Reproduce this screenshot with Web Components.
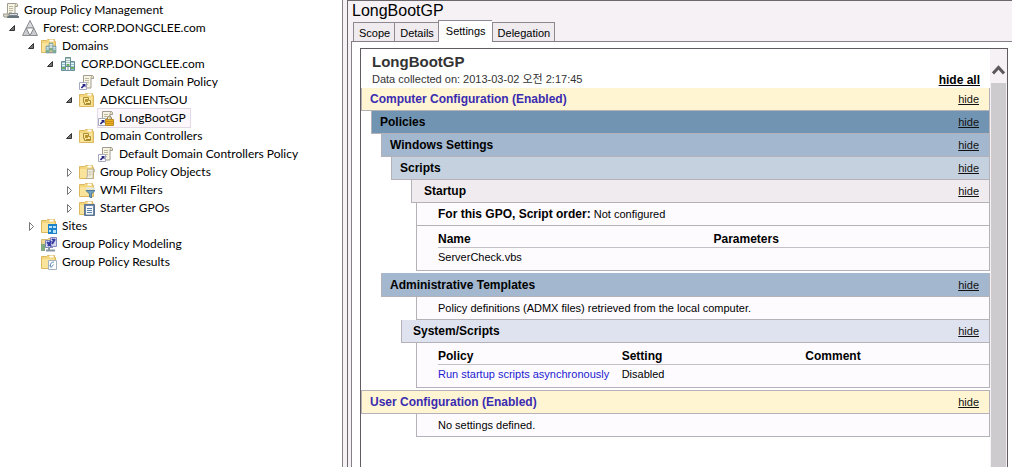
<!DOCTYPE html>
<html lang="en">
<head>
<meta charset="utf-8">
<title>Group Policy Management</title>
<style>
html, body { margin: 0; height: 100%; }
body { background: #fff; color: #000; font: 12px/18px Lato, sans-serif; }
</style>
</head>
<body>
<gp-console></gp-console>
<script>
const ICONS = {
  scroll: `<path d="M4.5 1.5h9q-1.500 1-1.500 3v9.500h-9l1.500-3z" fill="#f8f4e4" stroke="#a09c90"/><path d="M12 4.500h2.500v-2l-1-1" fill="#e8dfba" stroke="#a09c90"/><path d="M6 4.500h4M6 6.500h4M6 8.500h4M6 10.500h3" stroke="#bdb8a2"/>`,
  folder: `<path d="M.5 2.500h5l1-1h7v2h1v11H.5z" fill="#f3d67c" stroke="#dcb861"/><path d="M8.500 1.500h4v2h-4z" fill="#fff"/><path d="M1 5h12v9H1z" fill="#fae39a"/>`,
  link: `<path d="M.5 8.500h7v7h-7z" fill="#fff" stroke="#a5a9c0"/><path d="M3 10h3.500v3.500L5.300 12.300 3 14.600 1.800 13.400l2.300-2.300z" fill="#27277f"/>`
};
ICONS.root = ICONS.scroll + `<path d="M6 11.500h8.500v2H6z" fill="#d8dde0" stroke="#7d868c"/><path d="M4 14h12v2H4z" fill="#68747b"/><path d="M0 12h6l-2 3H1z" fill="#d9d5c9" stroke="#a09c90"/>`;
ICONS.forest = `<path d="M8 .5 11.800 8H4.200z" fill="#d6d8da" stroke="#8b8e92"/><path d="M4.200 8 8 15.500H.5zM11.800 8 15.500 15.500H8z" fill="#c9cbce" stroke="#8b8e92"/><path d="M4.200 8h7.600L8 15.500z" fill="#fff" stroke="#8b8e92"/>`;
const servers = `<path d="M5.500 1.500h5v9h-5z" fill="#a9c3bd" stroke="#6b8f8b"/><path d="M1.500 5.500h4v9h-4zM10.500 5.500h4v9h-4z" fill="#94bfd0" stroke="#648a9b"/><path d="M6 3.500h4M6 5.500h4M6 7.500h4M2 7.500h3M2 9.500h3M11 7.500h3M11 9.500h3" stroke="#edf6f4"/><path d="M2 12h3M11 12h3M7 9h2" stroke="#6db15f" stroke-width="2"/><path d="M8 11v3.500M6 14.500h4" stroke="#6f8d9a"/>`;
ICONS.domain = servers;
ICONS.domains = ICONS.folder + `<g transform="translate(4 4) scale(.75)">${servers}</g>`;
ICONS.gpo = ICONS.scroll + ICONS.link;
ICONS.gpolock = ICONS.gpo + `<path d="M9.500 10V7.500q2-3 4 0V10" fill="none" stroke="#94804a"/><path d="M7.500 9.500h8v6h-8z" fill="#f0b323" stroke="#bd8d26"/><path d="M8 11.500h7M8 13.500h7" stroke="#c98d15"/>`;
ICONS.ou = ICONS.folder + `<path d="M4.500 5.500h5v3h2v4h-6v-2h-1z" fill="#fbe7a0" stroke="#a98f35"/><path d="M6 7h3v3H6z" fill="#b8952e"/><path d="M7 11h4v1H7z" fill="#a58723"/>`;
ICONS.gpos = ICONS.folder + `<g transform="translate(5 4) scale(.75)">${ICONS.scroll}</g>`;
ICONS.wmi = ICONS.folder + `<path d="M7 8.500h9l-3.500 3.500V16l-2-1v-3z" fill="#6f9fc0" stroke="#527d9b"/><path d="M7 6.500h9" stroke="#dfe7ec" stroke-width="2"/>`;
ICONS.starter = ICONS.folder + `<path d="M5.500 4.500h10v11h-10z" fill="#6b87a5" stroke="#5b7390"/><path d="M7 6h7v8.500H7z" fill="#f4f8fc"/><path d="M8 8.500h5M8 10.500h5M8 12.500h5" stroke="#5b83ad"/>`;
ICONS.sites = ICONS.folder + `<path d="M7 6h9v10H7z" fill="#1e82c8"/><path d="M8 8h3v2H8zM12 8h3v2h-3zM8 12h2v2H8zM12 12h3v3h-3z" fill="#b9e4ff"/>`;
ICONS.modeling = `<path d="M.5 3.500h6l1-1h4v9H.5z" fill="#eed693" stroke="#d3b871"/><path d="M0 8h4v7H0z" fill="#83a981"/><path d="M4.500 4.500h7v7h-7z" fill="#dce1f5" stroke="#7a82bb"/><path d="M9.500 1.500h6v9h-6z" fill="#d7d9ef" stroke="#8388bd"/><path d="M6 6l4 4M10 5l-3 5M11 8l3-5M11 3l3 2" stroke="#343aa0" stroke-width="2"/><path d="M5 14.500h9M8 11v3" stroke="#8795a5" stroke-width="2"/>`;
ICONS.results = ICONS.folder + `<path d="M7.500 6.500h8v9h-8z" fill="#fff" stroke="#a5b2bd"/><path d="M13 8q-4 0-3.500 4M12.500 10.500l-2.500 3-1.500-2" fill="none" stroke="#5e8fbc"/>`;

function define(name, markup, setup) {
  const template = document.createElement("template");
  template.innerHTML = markup;
  customElements.define(name, class extends HTMLElement {
    constructor() {
      super();
      this.attachShadow({ mode: "open" }).append(template.content.cloneNode(true));
    }
    connectedCallback() { if (setup) setup(this, this.shadowRoot); }
  });
}

define("gp-icon", `<style>:host{display:block;flex:none;width:16px;height:16px}svg{display:block}</style><svg width="16" height="16" viewBox="0 0 16 16" fill="none" aria-hidden="true"></svg>`,
  (host, root) => { root.querySelector("svg").innerHTML = ICONS[host.getAttribute("name")] || ""; });

define("tree-node", `<style>
:host{display:block}
.row{display:flex;align-items:center;height:18px}
.toggle{display:block;flex:none;width:19px;height:18px;padding:0;border:0;background:none}
.toggle svg{display:block}
:host([root]) .toggle{display:none}
.closed,.open{display:none}
:host([state=open]) .open,:host([state=closed]) .closed{display:block}
.item{display:flex;align-items:center;gap:5px;height:18px;white-space:nowrap}
:host([selected]) .item{background:#fbf7fb;outline:1px solid #e3d9e6;padding-right:4px}
.kids{padding-left:19px}
:host([root]) .kids{padding-left:0}
</style>
<div class="row"><button class="toggle" type="button" tabindex="-1" aria-label="Expand or collapse"><svg width="19" height="18" viewBox="0 0 19 18"><path class="open" d="M11.500 6.500v5h-5z" fill="#777" stroke="#333"/><path class="closed" d="M7.500 5.500v8l4-4z" fill="#fff" stroke="#777"/></svg></button>
<div class="item"><gp-icon></gp-icon><span><slot name="label"></slot></span></div></div>
<div class="kids"><slot></slot></div>`,
  (host, root) => {
    const icon = document.createElement("gp-icon");
    icon.setAttribute("name", host.getAttribute("icon"));
    root.querySelector("gp-icon").replaceWith(icon);
  });

define("policy-tree", `<style>:host{display:block;padding:1px 3px;box-sizing:border-box}</style>
<tree-node root icon="root"><span slot="label">Group Policy Management</span>
 <tree-node state="open" icon="forest"><span slot="label">Forest: CORP.DONGCLEE.com</span>
  <tree-node state="open" icon="domains"><span slot="label">Domains</span>
   <tree-node state="open" icon="domain"><span slot="label">CORP.DONGCLEE.com</span>
    <tree-node icon="gpo"><span slot="label">Default Domain Policy</span></tree-node>
    <tree-node state="open" icon="ou"><span slot="label">ADKCLIENTsOU</span>
     <tree-node selected icon="gpolock"><span slot="label">LongBootGP</span></tree-node>
    </tree-node>
    <tree-node state="open" icon="ou"><span slot="label">Domain Controllers</span>
     <tree-node icon="gpo"><span slot="label">Default Domain Controllers Policy</span></tree-node>
    </tree-node>
    <tree-node state="closed" icon="gpos"><span slot="label">Group Policy Objects</span></tree-node>
    <tree-node state="closed" icon="wmi"><span slot="label">WMI Filters</span></tree-node>
    <tree-node state="closed" icon="starter"><span slot="label">Starter GPOs</span></tree-node>
   </tree-node>
  </tree-node>
  <tree-node state="closed" icon="sites"><span slot="label">Sites</span></tree-node>
  <tree-node icon="modeling"><span slot="label">Group Policy Modeling</span></tree-node>
  <tree-node icon="results"><span slot="label">Group Policy Results</span></tree-node>
 </tree-node>
</tree-node>`);

define("tab-strip", `<style>
:host{display:flex;align-items:flex-end;height:21px;padding-left:2px;border-bottom:1px solid #858087;margin-left:3px}
button{font:inherit;color:inherit;margin:0;box-sizing:border-box;height:19px;padding:2px 4px 0 5px;border:1px solid #8e8990;border-bottom:0;border-right-width:0;background:#efebef}
button:last-child{border-right-width:1px}
button[aria-selected=true]{height:22px;margin-bottom:-1px;padding:0 6px 1px 7px;background:#fff}
</style><button type="button" role="tab">Scope</button><button type="button" role="tab">Details</button><button type="button" role="tab" aria-selected="true">Settings</button><button type="button" role="tab">Delegation</button>`);

define("report-bar", `<style>
:host{display:flex;align-items:center;justify-content:space-between;box-sizing:border-box;height:23px;padding:0 10px 0 8px;border:1px solid #b5b1b8;border-top:0;background:var(--bar)}
:host([spaced]){height:24px;margin-top:2px;border-top:1px solid #b5b1b8}
:host([tone=main]){--bar:#fff5d3;color:#3a2bb0}
:host([tone=l1]){--bar:#7294b3;margin-left:10px}
:host([tone=l2]){--bar:#a3b8cf;margin-left:20px}
:host([tone=l2][spaced]){border-top-color:#a3b8cf}
:host([tone=l3]){--bar:#c5d1de;margin-left:30px}
:host([tone=l4]){--bar:#dfe3ef;margin-left:40px;padding-left:11px}
:host([tone=l5]){--bar:#f0ebee;margin-left:50px;padding-left:12px}
h2{margin:0;font:bold 12px/16px "Liberation Sans",sans-serif}
a{color:#111}
</style><h2><slot></slot></h2><a href="#">hide</a>`);

define("report-box", `<style>
:host{display:block;margin-left:55px;padding-left:21px;border:1px solid #b5b1b8;border-top:0;background:#fefbff;line-height:22px}
::slotted(b){font:bold 12px/16px "Liberation Sans",sans-serif}
</style><slot></slot>`);

define("report-table", `<style>
:host{display:block}
table{width:100%;border-collapse:separate;border-spacing:0;table-layout:fixed}
th,td{padding:0;text-align:left;vertical-align:top}
th{padding-top:5px;border-bottom:1px solid #c4c0c8;font:bold 12px/16px "Liberation Sans",sans-serif}
td{height:22px;line-height:18px}
a{color:#1a1ad0;text-decoration:none}
</style><table><thead><tr></tr></thead><tbody><tr></tr></tbody></table>`,
  (host, root) => {
    const [head, body] = root.querySelectorAll("tr");
    if (head.children.length) return;
    for (const text of host.getAttribute("columns").split("|")) {
      head.append(Object.assign(document.createElement("th"), { textContent: text }));
    }
    for (const text of host.getAttribute("cells").split("|")) {
      const cell = document.createElement("td");
      if (host.hasAttribute("linked") && !body.children.length) {
        cell.append(Object.assign(document.createElement("a"), { href: "#", textContent: text }));
      } else cell.textContent = text;
      body.append(cell);
    }
  });

define("scroll-bar", `<style>
:host{display:flex;flex-direction:column;flex:none;width:15px;padding:0 1px;background:#f5f1f5}
button{height:34px;border:0;padding:8px 0 0;background:none;display:grid;place-items:center}
.thumb{flex:1;background:#cdcbcd}
</style><button type="button" aria-label="Scroll up"><svg width="13" height="10" viewBox="0 0 13 10"><path d="M1 8.500 6.500 2.500 12 8.500" fill="none" stroke="#5c595c" stroke-width="3"/></svg></button><div class="thumb"></div>`);

define("settings-report", `<style>
:host{display:flex;flex:1;margin:6px 4px 0 8px;border:1px solid #5f5b60;border-bottom:0;background:#fff}
main{flex:1;min-width:0}
header{display:flex;align-items:flex-end;justify-content:space-between;height:39px;padding:0 10px 0 11px}
h1{margin:0;font:bold 15px/19px "Liberation Sans",sans-serif;color:#333}
p{margin:0;line-height:17px;color:#333}
header a{font:bold 12px/16px "Liberation Sans",sans-serif;color:#000}
</style>
<main>
<header><div><h1>LongBootGP</h1><p>Data collected on: 2013-03-02 오전 2:17:45</p></div><a href="#">hide all</a></header>
<report-bar tone="main">Computer Configuration (Enabled)</report-bar>
<report-bar tone="l1">Policies</report-bar>
<report-bar tone="l2">Windows Settings</report-bar>
<report-bar tone="l3">Scripts</report-bar>
<report-bar tone="l5">Startup</report-bar>
<report-box><b>For this GPO, Script order:</b> Not configured</report-box>
<report-box><report-table columns="Name|Parameters" cells="ServerCheck.vbs|"></report-table></report-box>
<report-bar tone="l2" spaced>Administrative Templates</report-bar>
<report-box>Policy definitions (ADMX files) retrieved from the local computer.</report-box>
<report-bar tone="l4">System/Scripts</report-bar>
<report-box><report-table linked columns="Policy|Setting|Comment" cells="Run startup scripts asynchronously|Disabled|"></report-table></report-box>
<report-bar tone="main" spaced>User Configuration (Enabled)</report-bar>
<report-box>No settings defined.</report-box>
</main>
<scroll-bar></scroll-bar>`);

define("details-pane", `<style>
:host{display:flex;flex-direction:column;box-sizing:border-box;border-top:1px solid #6d686e;border-left:1px solid #6d686e;background:#f5f1f5;font:11px/16px "Liberation Sans","Noto Sans CJK KR",sans-serif}
.title{height:19px;padding-left:4px;font-size:16px;line-height:19px}
.page{display:flex;flex:1;margin-left:3px;border-left:1px solid #858087;background:#fff}
</style><div class="title">LongBootGP</div><tab-strip></tab-strip><div class="page"><settings-report></settings-report></div>`);

define("gp-console", `<style>
:host{display:flex;min-height:100vh}
policy-tree{flex:0 0 342px}
.splitter{flex:0 0 4px;border-left:1px solid #858087;background:#f5f1f5}
details-pane{flex:1;min-width:0}
</style><policy-tree></policy-tree><div class="splitter"></div><details-pane></details-pane>`);
</script>
</body>
</html>
